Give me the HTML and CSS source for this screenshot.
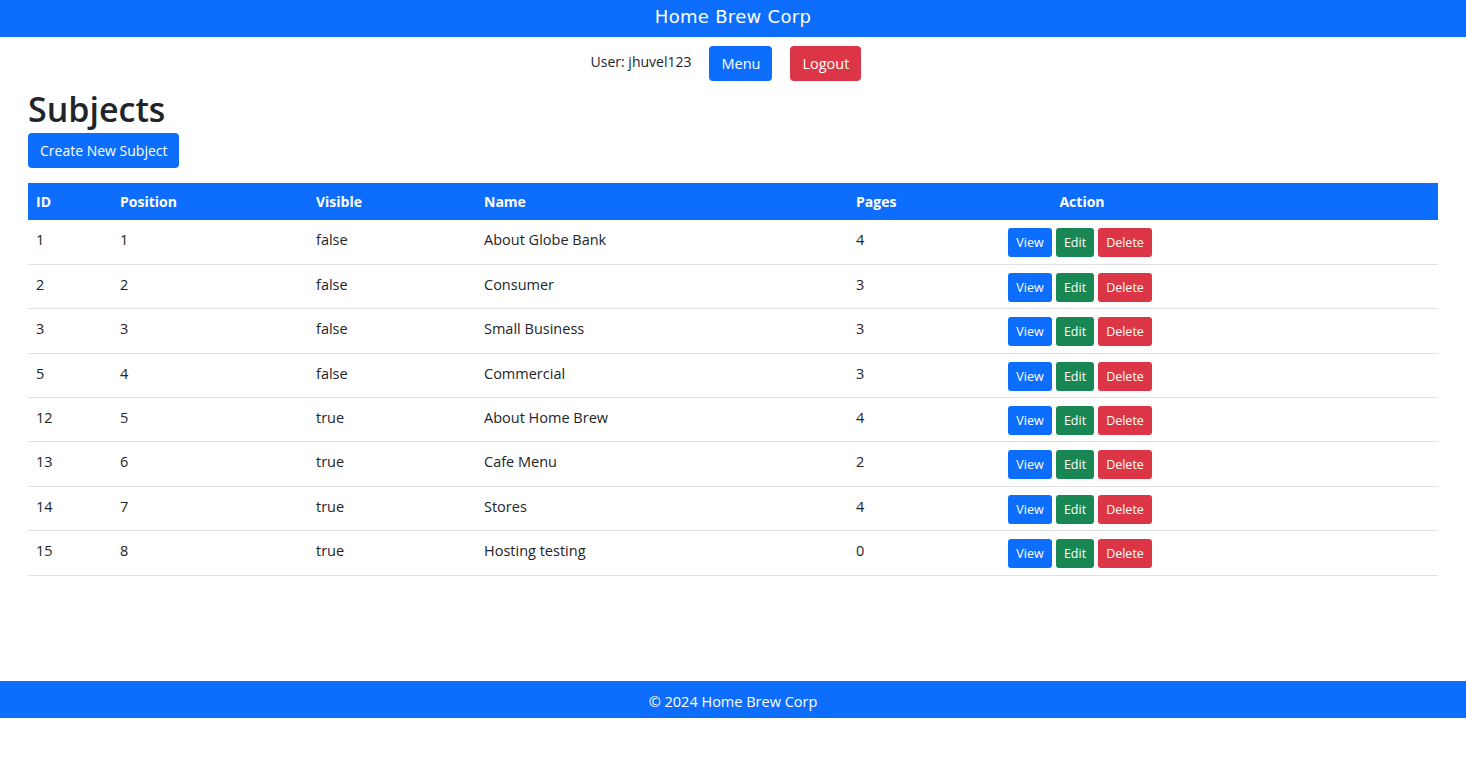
FILE: index.html
```html
<!DOCTYPE html>
<html lang="en">
<head>
<meta charset="utf-8">
<title>Subjects - Home Brew Corp</title>
<link rel="stylesheet" href="styles.css">
</head>
<body>
<header class="topbar">Home Brew Corp</header>
<div class="userbar">
  <span class="user">User: jhuvel123</span>
  <a class="btn btn-primary btn-md" href="#">Menu</a>
  <a class="btn btn-danger btn-md" href="#">Logout</a>
</div>
<main class="content">
  <h1 class="title">Subjects</h1>
  <a class="btn btn-primary btn-md btn-create" href="#">Create New Subject</a>
  <table class="subjects">
    <colgroup>
      <col class="c-id"><col class="c-pos"><col class="c-vis"><col class="c-name"><col class="c-pages"><col class="c-action"><col>
    </colgroup>
    <thead>
      <tr><th>ID</th><th>Position</th><th>Visible</th><th>Name</th><th>Pages</th><th class="center">Action</th><th></th></tr>
    </thead>
    <tbody>
      <tr><td>1</td><td>1</td><td>false</td><td>About Globe Bank</td><td>4</td><td><div class="actions"><a class="btn btn-primary btn-sm" href="#">View</a><a class="btn btn-success btn-sm" href="#">Edit</a><a class="btn btn-danger btn-sm" href="#">Delete</a></div></td><td></td></tr>
      <tr><td>2</td><td>2</td><td>false</td><td>Consumer</td><td>3</td><td><div class="actions"><a class="btn btn-primary btn-sm" href="#">View</a><a class="btn btn-success btn-sm" href="#">Edit</a><a class="btn btn-danger btn-sm" href="#">Delete</a></div></td><td></td></tr>
      <tr><td>3</td><td>3</td><td>false</td><td>Small Business</td><td>3</td><td><div class="actions"><a class="btn btn-primary btn-sm" href="#">View</a><a class="btn btn-success btn-sm" href="#">Edit</a><a class="btn btn-danger btn-sm" href="#">Delete</a></div></td><td></td></tr>
      <tr><td>5</td><td>4</td><td>false</td><td>Commercial</td><td>3</td><td><div class="actions"><a class="btn btn-primary btn-sm" href="#">View</a><a class="btn btn-success btn-sm" href="#">Edit</a><a class="btn btn-danger btn-sm" href="#">Delete</a></div></td><td></td></tr>
      <tr><td>12</td><td>5</td><td>true</td><td>About Home Brew</td><td>4</td><td><div class="actions"><a class="btn btn-primary btn-sm" href="#">View</a><a class="btn btn-success btn-sm" href="#">Edit</a><a class="btn btn-danger btn-sm" href="#">Delete</a></div></td><td></td></tr>
      <tr><td>13</td><td>6</td><td>true</td><td>Cafe Menu</td><td>2</td><td><div class="actions"><a class="btn btn-primary btn-sm" href="#">View</a><a class="btn btn-success btn-sm" href="#">Edit</a><a class="btn btn-danger btn-sm" href="#">Delete</a></div></td><td></td></tr>
      <tr><td>14</td><td>7</td><td>true</td><td>Stores</td><td>4</td><td><div class="actions"><a class="btn btn-primary btn-sm" href="#">View</a><a class="btn btn-success btn-sm" href="#">Edit</a><a class="btn btn-danger btn-sm" href="#">Delete</a></div></td><td></td></tr>
      <tr><td>15</td><td>8</td><td>true</td><td>Hosting testing</td><td>0</td><td><div class="actions"><a class="btn btn-primary btn-sm" href="#">View</a><a class="btn btn-success btn-sm" href="#">Edit</a><a class="btn btn-danger btn-sm" href="#">Delete</a></div></td><td></td></tr>
    </tbody>
  </table>
</main>
<footer class="footer">© 2024 Home Brew Corp</footer>
</body>
</html>
```

FILE: styles.css
```css
* { box-sizing: border-box; }
html, body { margin: 0; padding: 0; }
body {
  font-family: "Open Sans", "Noto Sans", Arial, sans-serif;
  font-size: 14.5px;
  color: #212529;
  background: #fff;
}
.topbar {
  background: #0d6efd;
  color: #fff;
  height: 37px;
  line-height: 33px;
  text-align: center;
  font-size: 18px;
  font-family: "DejaVu Sans", "Noto Sans", sans-serif;
  letter-spacing: 0.3px;
}
.userbar {
  display: flex;
  justify-content: center;
  align-items: flex-start;
  padding-top: 9px;
  padding-right: 14px;
  gap: 18px;
}
.user { line-height: 32px; font-size: 14px; }
.content { padding: 0 28px; }
.title {
  font-size: 34px;
  font-weight: 600;
  margin: 5px 0 0;
  line-height: 46px;
}
.btn {
  display: inline-block;
  text-decoration: none;
  color: #fff;
  border-radius: 4px;
  text-align: center;
}
.btn-md { padding: 0 12px; height: 35px; line-height: 35px; font-size: 14.5px; }
.btn-create { font-size: 14px; padding: 0 12px; margin-top: 1px; }
.btn-sm { height: 29px; line-height: 29px; font-size: 12.5px; padding: 0; border-radius: 3px; }
.btn-primary { background: #0d6efd; }
.btn-danger { background: #dc3545; }
.btn-success { background: #198754; }
.subjects {
  width: 100%;
  border-collapse: collapse;
  margin-top: 15px;
  table-layout: fixed;
}
.c-id { width: 84px; }
.c-pos { width: 196px; }
.c-vis { width: 168px; }
.c-name { width: 372px; }
.c-pages { width: 152px; }
.c-action { width: 164px; }
.subjects th {
  background: #0d6efd;
  color: #fff;
  font-weight: 700;
  text-align: left;
  padding: 6px 8px;
  height: 37px;
  font-size: 14px;
}
.subjects th.center { text-align: center; }
.subjects td {
  padding: 8px 8px 6px;
  vertical-align: top;
  line-height: 24px;
  border-bottom: 1px solid #dee2e6;
  height: 44.4px;
}
.actions {
  display: flex;
  gap: 4px;
  white-space: nowrap;
}
.actions .btn-primary { width: 44px; }
.actions .btn-success { width: 38px; }
.actions .btn-danger { width: 54px; }
.footer {
  margin-top: 105px;
  background: #0d6efd;
  color: #fff;
  text-align: center;
  height: 37px;
  line-height: 41px;
  font-size: 14.5px;
}
```
